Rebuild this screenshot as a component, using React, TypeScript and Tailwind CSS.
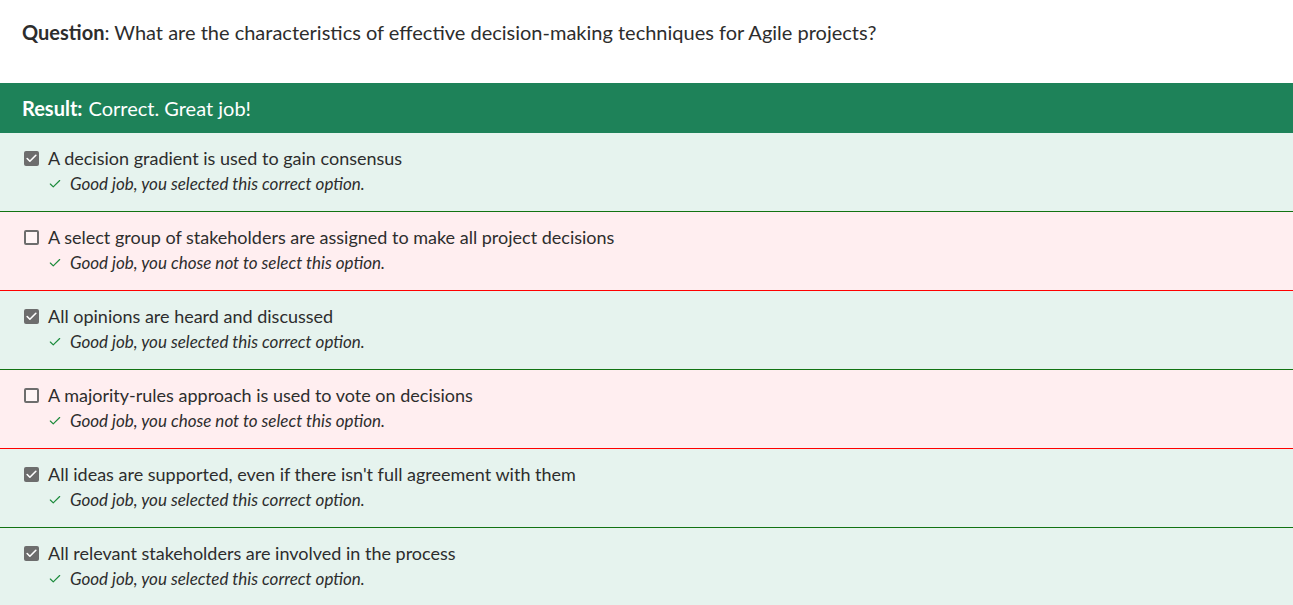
import { Check } from "lucide-react"

const options = [
  { text: "A decision gradient is used to gain consensus", selected: true },
  { text: "A select group of stakeholders are assigned to make all project decisions", selected: false },
  { text: "All opinions are heard and discussed", selected: true },
  { text: "A majority-rules approach is used to vote on decisions", selected: false },
  { text: "All ideas are supported, even if there isn't full agreement with them", selected: true },
  { text: "All relevant stakeholders are involved in the process", selected: true },
]

function Box({ checked }: { checked: boolean }) {
  if (checked) {
    return (
      <span className="flex h-[15px] w-[15px] shrink-0 items-center justify-center rounded-[2px] bg-[#6d6d6d]">
        <Check className="h-[13px] w-[13px] text-white" strokeWidth={3} />
      </span>
    )
  }
  return <span className="h-[15px] w-[15px] shrink-0 rounded-[2px] border-2 border-[#6d6d6d] bg-white/40" />
}

export default function App() {
  return (
    <div className="min-h-screen bg-white font-['Lato','Open_Sans',sans-serif] text-[#2d3b45]">
      <div className="flex h-[83px] items-start px-[22px] pt-[19px]">
        <p className="text-[20px] leading-[26px] text-[#2d2d2d]">
          <span className="font-bold">Question</span>: What are the characteristics of effective decision-making
          techniques for Agile projects?
        </p>
      </div>

      <div className="flex h-[50px] items-center bg-[#1e8259] px-[22px] text-[20px] text-white">
        <span className="font-bold">Result:</span>
        <span className="ml-[6px]">Correct. Great job!</span>
      </div>

      {options.map((o, i) => (
        <div
          key={i}
          className={
            o.selected
              ? "h-[79px] border-b border-[#127312] bg-[#e6f3ee] px-[24px] pt-[14px]"
              : "h-[79px] border-b border-[#ff0000] bg-[#ffeef0] px-[24px] pt-[14px]"
          }
        >
          <div className="flex items-center gap-[9px]">
            <Box checked={o.selected} />
            <span className="text-[18px] leading-[23px] text-[#2d2d2d]">{o.text}</span>
          </div>
          <div className="mt-[3px] flex items-center gap-[8px] pl-[24px]">
            <Check className="h-[14px] w-[14px] text-[#1a8a3a]" strokeWidth={2} />
            <span className="text-[17px] italic leading-[22px] text-[#2d2d2d]">
              {o.selected
                ? "Good job, you selected this correct option."
                : "Good job, you chose not to select this option."}
            </span>
          </div>
        </div>
      ))}
    </div>
  )
}
